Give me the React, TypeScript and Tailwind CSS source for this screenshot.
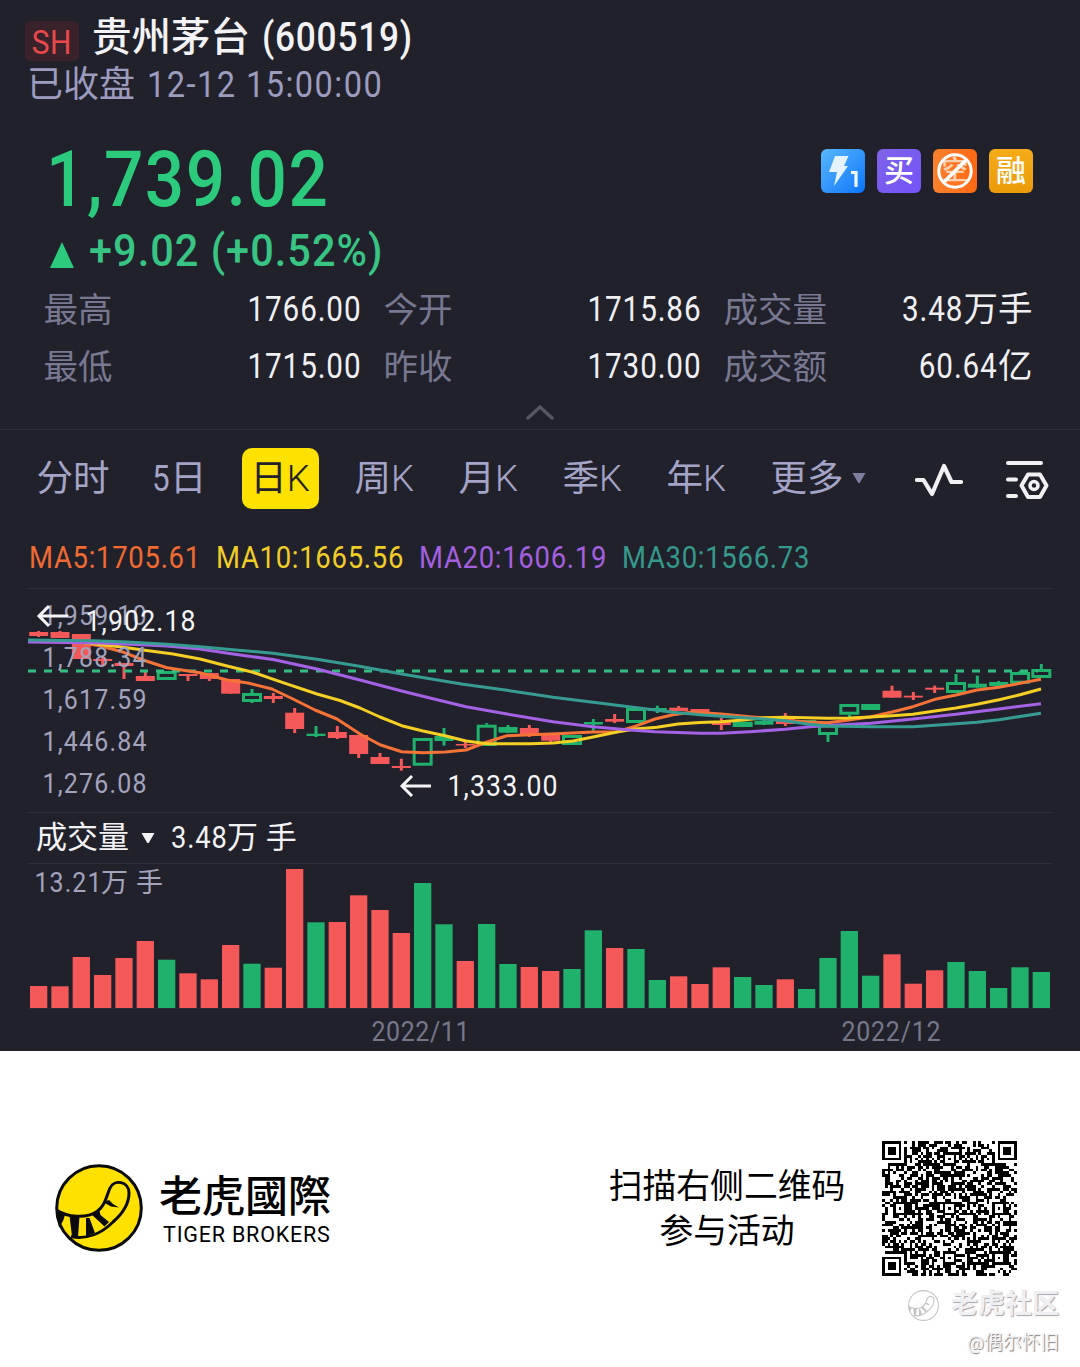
import type { ReactNode } from "react";

type Tone = "up" | "down";

interface Candle {
  tone: Tone;
  top: number;
  bottom: number;
  high: number;
  low: number;
  hollow?: boolean;
  volume: number;
}

const UP = "#20b26c";
const DOWN = "#f55858";
const STEP = 1024 / 48;

const r = (top: number, bottom: number, high: number, low: number, volume: number): Candle => ({
  tone: "down", top, bottom, high, low, volume,
});
const g = (top: number, bottom: number, high: number, low: number, volume: number): Candle => ({
  tone: "up", top, bottom, high, low, volume,
});
const h = (top: number, bottom: number, high: number, low: number, volume: number): Candle => ({
  tone: "up", top, bottom, high, low, volume, hollow: true,
});

// body top, body bottom, wick top, wick bottom, volume bar height
const CANDLES: Candle[] = [
  r(43, 47, 42, 48, 22), r(43, 49, 42, 49, 21.7), r(45, 70, 45, 70, 51), r(70, 72, 68, 76, 33),
  r(74, 77, 74, 90, 50), r(87, 92, 83, 92, 67), h(82, 91, 82, 91, 48.3), r(85, 87, 85, 92, 34.7),
  r(84, 90, 84, 92, 28.7), r(90, 104.7, 90, 104.7, 63), h(104, 113, 100, 114, 44.3), r(107, 110, 104, 114, 40.3),
  r(123.7, 140, 119, 144, 139), g(144.7, 147, 137, 148, 85.7), r(143, 149, 137, 150, 86), r(146, 165, 146, 169, 112.7),
  r(168, 175, 164, 175, 98), r(177, 179, 169.7, 181.7, 75), h(149, 176.7, 149, 176.7, 125), g(147, 152, 139, 156.6, 83.7),
  r(155, 156.5, 153, 159, 47), h(135.7, 157, 134, 157, 84), g(138, 143.7, 136, 143.7, 44), r(139, 145.7, 136, 148, 41),
  r(144.7, 151.7, 144.7, 153.7, 37), h(146, 156, 146, 156, 39), g(133, 135.5, 130, 141.7, 77.7), r(130, 132.7, 125, 134, 60),
  h(119, 134, 119, 134, 59), g(119, 122, 116.7, 124, 28), r(118.7, 122, 117, 122, 31.7), r(120, 123, 120, 125, 24),
  r(133, 136, 129, 141, 40.7), h(132.7, 138, 132.7, 138, 31), g(131.7, 135.7, 131, 136, 23), r(127, 135, 124, 137, 28.7),
  g(131, 135, 131, 135, 19), h(135.7, 146, 135.7, 153, 50), h(115, 125.7, 115, 129, 77), g(115, 121, 115, 121, 32.3),
  r(101.7, 108.7, 96.7, 108.7, 53.7), r(106.7, 108.5, 103, 111, 24.3), r(98.7, 100.7, 96.7, 104, 37.7), h(93, 104, 85, 104, 46),
  g(94.7, 98.7, 86.7, 98.7, 37), g(93, 97, 92, 97, 20), h(83, 94.7, 82, 94.7, 40.7), h(80, 89, 75, 89, 36),
];

const MA_LINES = [
  {
    color: "#f57337",
    label: "MA5:1705.61",
    legend: "w-[187px] text-[#f06a32]",
    points: "0,52 42,52.5 72,56.7 94,62.7 115,71 139,78.7 172,83.7 199,91 220,94 244,100 265,110 287,121 309,130 332,145 352,155.7 373.7,162.7 395,163.7 417,163 438,161 459,153 479,146.7 502,145.7 529,144.7 565,143 589,142.7 609,136.7 627,130 645,125.7 665,123 693,125 722,127.7 757,131 779,133 800,133.7 821,131 843,127.7 864,123 885,117.7 907,110.3 928,106 949,101 971,98.3 992,94.3 1013,90.3",
  },
  {
    color: "#f6cf25",
    label: "MA10:1665.56",
    legend: "w-[203px] text-[#f0cd28]",
    points: "0,52 42,52 72,55.5 94,58 115,61 145,65 172,70 199,77 224,83 255,93.7 289,105 312,111.5 332,119 352,128 373.7,136.7 395,142 417,146.7 438,152 459,154.7 502,154.7 525,154 545,152 565,148 589,143 607,140 629,138.3 650,135 672,133.5 693,132.7 715,131 736,128.7 757,128.3 800,129.3 821,129 843,128 864,126.7 885,125.3 907,122 928,119 949,115.3 971,110.7 992,105.7 1013,100",
  },
  {
    color: "#a462e4",
    label: "MA20:1606.19",
    legend: "w-[203px] text-[#a35fdf]",
    points: "0,53 72,54 119,56 139,57 172,60 205,65 245,70.5 289,80 330,90.5 373.7,102 405,109.7 438,117.7 479,125 525,132.7 565,137.7 599,140.7 627,142.7 672,144.3 693,144.3 722,142.7 757,140.3 782,137.7 805,136.3 843,134.3 885,130 928,125.3 971,120 1013,114.7",
  },
  {
    color: "#369c91",
    label: "MA30:1566.73",
    legend: "w-[200px] text-[#34998b]",
    points: "0,51 65,51.7 99,53 139,55.3 172,57.7 205,60.7 245,64.3 289,70.3 330,77 373.7,85 435,95.3 479,101.3 525,108.3 565,113.3 609,118.7 645,123.3 672,125.7 693,127.3 736,130 757,131.7 779,135 800,137 843,137.7 885,137.7 907,136.3 949,133.3 971,130.7 1013,124.3",
  },
];

const AXIS = ["1,959.10", "1,788.34", "1,617.59", "1,446.84", "1,276.08"];

// label, number, unit
const STATS = [
  [["最高", "1766.00", ""], ["今开", "1715.86", ""], ["成交量", "3.48", "万手"]],
  [["最低", "1715.00", ""], ["昨收", "1730.00", ""], ["成交额", "60.64", "亿"]],
];

const K_TABS = ["周", "月", "季", "年"];

function Badge({ className, children }: { className: string; children: ReactNode }) {
  return (
    <div className={`flex h-11 w-11 items-center justify-center overflow-hidden rounded-[6px] text-[30px] leading-[46px] font-medium text-white ${className}`}>
      {children}
    </div>
  );
}

function Header() {
  return (
    <header className="h-[138px] pt-[14px]">
      <div className="flex h-[46px] items-start pl-[25px]">
        <span className="mt-[7px] h-10 w-[54px] rounded-[5px] bg-[#39222a] text-center text-[34px] leading-[43px] text-[#e9494d]">
          <span className="inline-block scale-x-[0.88] tracking-[0.5px]">SH</span>
        </span>
        <h1 className="ml-[13px] flex text-[39.5px] leading-[47px] font-medium whitespace-pre text-[#f3f3f5]">
          贵州茅台
          <span className="ml-[12px] origin-left scale-x-[0.86] text-[41px] leading-[46px] tracking-[0.9px]">(600519)</span>
        </h1>
      </div>
      <div className="flex pl-[27px] text-[36px] leading-[51px] text-[#9c9cbe]">
        已收盘
        <span className="ml-[12px] origin-left scale-x-[0.88] text-[37px] leading-[50px] tracking-[1.65px]">12-12 15:00:00</span>
      </div>
    </header>
  );
}

function Quote() {
  return (
    <section className="h-[292px] border-b border-[#30303d]">
      <div className="flex h-[80px] justify-between pr-[47px] pl-[46px]">
        <div className="origin-left scale-x-[0.9] text-[77px] leading-[84px] font-medium tracking-[1.7px] text-[#2bca7c]">1,739.02</div>
        <div className="mt-[11px] flex gap-3">
          <Badge className="bg-linear-to-br from-[#58b7fb] to-[#0674fa]">
            <svg viewBox="0 0 44 44" className="h-11 w-11">
              <path d="M14 7h13.500l-4.500 10h4L13 37l3-14H8z" fill="#e4f3ff" />
              <path d="M30 23.500h5V38" fill="none" stroke="#f1f8ff" strokeWidth="3.200" />
            </svg>
          </Badge>
          <Badge className="bg-linear-to-br from-[#8062e8] to-[#7353f8]">买</Badge>
          <Badge className="bg-linear-to-r from-[#f8812e] to-[#ff6710]">
            <span className="relative flex h-11 w-11 items-center justify-center text-[27px] text-[#ffd0ae]">
              空
              <svg viewBox="0 0 44 44" className="absolute inset-0">
                <circle cx="22" cy="22" r="16.200" fill="none" stroke="#fff" strokeWidth="3" />
                <path d="M33 11 11 33" stroke="#fff" strokeWidth="3.500" />
              </svg>
            </span>
          </Badge>
          <Badge className="bg-linear-to-b from-[#f5ac18] to-[#eb9b08]">融</Badge>
        </div>
      </div>
      <div className="flex h-[66px] items-center pl-[50px] text-[45px] leading-[66px] font-medium text-[#38c483]">
        <svg viewBox="0 0 24 26" className="mt-[8px] mr-[15px] h-[26px] w-6">
          <path d="M12 0 24 26H0z" fill="#2bca7c" />
        </svg>
        <span className="origin-left scale-x-[0.92] tracking-[1.15px] whitespace-pre">+9.02 (+0.52%)</span>
      </div>
      <div>
        {STATS.map((row) => (
          <div key={row[0][0]} className="grid h-[57px] grid-cols-[318px_318px_309px] gap-x-[22px] pl-[43.500px] text-[34.5px] leading-[50px] text-[#f0f0f3]">
            {row.map(([label, value, unit]) => (
              <div key={label} className="flex">
                <span className="mr-auto leading-[52px] text-[#787890]">{label}</span>
                <span className="origin-right scale-x-[0.86] tracking-[1px]">{value}</span>
                {unit && <span>{unit}</span>}
              </div>
            ))}
          </div>
        ))}
      </div>
      <svg viewBox="0 0 28 16" className="mx-auto mt-[6px] h-4 w-7">
        <path d="M2 14 14 3l12 11" fill="none" stroke="#555563" strokeWidth="3.500" strokeLinecap="round" />
      </svg>
    </section>
  );
}

function Tabs() {
  return (
    <nav className="grid h-[96px] grid-cols-[115px_90px_114px_104px_104px_104px_104px_143px_91px_43px] items-center pl-[36.500px] text-[36.5px] leading-[61px] whitespace-nowrap text-[#a4a4c6]">
      <span>分时</span>
      <span className="flex">
        <span className="-mr-[2px] origin-left scale-x-[0.86]">5</span>日
      </span>
      <span className="flex h-[61px] w-[77px] justify-center rounded-[10px] bg-[#fde100] text-[#22222a]">
        日<span className="font-light">K</span>
      </span>
      {K_TABS.map((tab) => (
        <span key={tab} className="-ml-[1px] flex">
          {tab}
          <span className="font-light">K</span>
        </span>
      ))}
      <span className="-ml-[1px] flex items-center">
        更多
        <svg viewBox="0 0 16 12" className="ml-[7px] h-3 w-4">
          <path d="M1.500 1h13L9 10.500q-1 1.200-2 0z" fill="#7f7fa0" />
        </svg>
      </span>
      <svg viewBox="0 0 48 36" className="mt-[4px] h-9 w-12">
        <path d="M2 18h6.500L17 32 29 4l7.500 16H46" fill="none" stroke="#f1f1f3" strokeWidth="4.200" strokeLinecap="round" strokeLinejoin="round" />
      </svg>
      <svg viewBox="0 0 44 40" className="mt-[4px] h-10 w-11 justify-self-end" fill="none" stroke="#f1f1f3" strokeWidth="4" strokeLinecap="round" strokeLinejoin="round">
        <path d="M3 3h33M3 19.500h8M3 36h8M23 14.500h12l6.500 11L35 37H23l-6.500-11.500z" />
        <circle cx="29" cy="25.500" r="4" strokeWidth="3.500" />
      </svg>
    </nav>
  );
}

function ChartLabel({ x, y, width, children }: { x: number; y: number; width: number; children: string }) {
  return (
    <text transform={`translate(${x} ${y}) scale(0.89 1)`} textLength={width / 0.89}>
      {children}
    </text>
  );
}

function PriceChart() {
  return (
    <svg viewBox="0 0 1024 223" className="block h-[223px] w-[1024px] overflow-visible">
      {CANDLES.map((c, i) => {
        const x = (i + 0.5) * STEP;
        const color = c.tone === "up" ? UP : DOWN;
        const body = c.bottom - c.top;
        return (
          <g key={i}>
            {c.hollow ? (
              <>
                <path d={`M${x} ${c.high}V${c.top}M${x} ${c.bottom}V${c.low}`} stroke={color} strokeWidth="3" />
                <rect x={x - 8.5} y={c.top + 1.5} width="17" height={body - 3} fill="none" stroke={color} strokeWidth="3" />
              </>
            ) : (
              <>
                <path d={`M${x} ${c.high}V${c.low}`} stroke={color} strokeWidth="3" />
                <rect x={x - 9.5} y={c.top} width="19" height={body} fill={color} />
              </>
            )}
          </g>
        );
      })}
      <path d="M0 82H1010" stroke="#34bd81" strokeWidth="3" strokeDasharray="8 8" />
      {MA_LINES.map((line) => (
        <polyline key={line.label} points={line.points} fill="none" stroke={line.color} strokeWidth="3" strokeLinejoin="round" />
      ))}
      <g fill="#a3a3bc" fontSize="28">
        {AXIS.map((label, i) => (
          <ChartLabel key={label} x={14.5} y={36 + i * 42} width={104}>{label}</ChartLabel>
        ))}
      </g>
      <g fill="none" stroke="#f4f4f6" strokeWidth="3">
        <path d="M40 27H11M21 17 11 27l10 10" />
        <path d="M403 197H374M384 187l-10 10 10 10" />
      </g>
      <g fill="#f4f4f6" fontSize="30">
        <ChartLabel x={57.5} y={41.5} width={110}>1,902.18</ChartLabel>
        <ChartLabel x={419.5} y={206.5} width={110}>1,333.00</ChartLabel>
      </g>
    </svg>
  );
}

function VolumeChart() {
  return (
    <svg viewBox="0 0 1024 187" className="block h-[187px] w-[1024px]">
      {CANDLES.map((c, i) => (
        <rect key={i} x={i * STEP + 2} y={144 - c.volume} width="17.300" height={c.volume} fill={c.tone === "up" ? UP : DOWN} />
      ))}
      <path d="M0 144.500H1024" stroke="#2b2b38" />
      <g fill="#a3a3bc" fontSize="28">
        <ChartLabel x={6.5} y={28} width={67}>13.21</ChartLabel>
        <text x="73" y="28" fontSize="27">万</text>
        <text x="108" y="28" fontSize="27">手</text>
      </g>
      <g fill="#77778a" fontSize="28">
        <ChartLabel x={343.5} y={177} width={98}>2022/11</ChartLabel>
        <ChartLabel x={813.5} y={177} width={99}>2022/12</ChartLabel>
      </g>
    </svg>
  );
}

function TigerMark({ className, disc, ink }: { className: string; disc: string; ink: string }) {
  return (
    <svg viewBox="0 0 88 88" className={className}>
      <circle cx="44" cy="44" r="42.300" fill={disc} stroke={ink} strokeWidth="3" />
      <path
        d="M2.300 46.500C12 53 31 55 42 47.500 50 42 51 33 55 24c4-9 19-7 19 5 0 13-8 22-16 29-11 11-26 18-42 14.500"
        fill="none"
        stroke={ink}
        strokeWidth="3"
      />
      <path
        d="M2 47l8 4-2 6-4 7zM14.500 51.500l10 1-1.500 20.500-6-.5zM31 54h3.500L40 69l-9 3.500zM36 50l8-5 1.500 6L54 58l-4.500 4.500zM48 38l6-2 4 4 6 3.500-8-1z"
        fill={ink}
      />
    </svg>
  );
}

const QR_SIZE = 49;

function finder(x: number, y: number) {
  const ring = Math.max(Math.abs(x - 3), Math.abs(y - 3));
  return ring === 3 || ring <= 1;
}

function buildQr() {
  let seed = 600519;
  let path = "";
  const marks = [6, 24, 42];
  for (let y = 0; y < QR_SIZE; y++) {
    for (let x = 0; x < QR_SIZE; x++) {
      seed = (Math.imul(seed, 1664525) + 1013904223) >>> 0;
      let on = (seed >>> 16) % 100 < 53;
      if (x === 6 || y === 6) on = (x + y) % 2 === 0;
      for (const my of marks) {
        for (const mx of marks) {
          const ring = Math.max(Math.abs(x - mx), Math.abs(y - my));
          if (ring <= 2) on = ring !== 1;
        }
      }
      const far = QR_SIZE - 7;
      if (x < 8 && y < 8) on = x < 7 && y < 7 && finder(x, y);
      else if (x >= far - 1 && y < 8) on = x >= far && y < 7 && finder(x - far, y);
      else if (x < 8 && y >= far - 1) on = x < 7 && y >= far && finder(x, y - far);
      if (on) path += `M${x} ${y}h1v1h-1z`;
    }
  }
  return path;
}

const QR_PATH = buildQr();

function Footer() {
  return (
    <footer className="h-[316px] bg-white text-black">
      <div className="flex h-[236px] pt-[90px] pl-[55px]">
        <TigerMark className="mt-[23px] h-[88px] w-[88px]" disc="#ffe100" ink="#0b0b0b" />
        <div className="mt-[32px] ml-[16px] w-[440px]">
          <div className="font-['Roboto','Noto_Sans_CJK_TC',sans-serif] text-[43px] leading-[48px] font-medium">老虎國際</div>
          <div className="pl-[4px] text-[21.5px] leading-[27px] tracking-[0.8px]">TIGER BROKERS</div>
        </div>
        <div className="mt-[22.500px] w-[256px] text-center text-[33.800px] leading-[45px]">
          扫描右侧二维码
          <br />
          参与活动
        </div>
        <svg viewBox="0 0 49 49" className="ml-[27px] h-[135px] w-[135px]" shapeRendering="crispEdges">
          <path d={QR_PATH} fill="#000" />
        </svg>
      </div>
      <div className="flex h-[34px] items-center justify-end pr-[21px]">
        <TigerMark className="mt-[2px] mr-[12px] h-[31px] w-[31px]" disc="#fff" ink="#c4c4c8" />
        <span className="text-[27px] leading-[36px] font-bold text-[#f0f0f3] [text-shadow:1px_1px_1px_#a4a4ac]">老虎社区</span>
      </div>
      <div className="mt-[8px] pr-[21px] text-right text-[18.800px] leading-[28px] text-[#f4f4f4] [text-shadow:1px_1px_1px_#7f7f84]">@偶尔怀旧</div>
    </footer>
  );
}

export default function App() {
  return (
    <div className="w-[1080px] bg-[#21212b] font-['Roboto','Noto_Sans_CJK_SC',sans-serif]">
      <Header />
      <Quote />
      <Tabs />
      <main className="px-7">
        <div className="flex h-[63px] border-b border-[#30303c] pl-[1px] text-[30.500px] leading-[64px]">
          {MA_LINES.map((line) => (
            <span key={line.label} className={line.legend}>
              <span className="inline-block origin-left scale-x-[0.9] tracking-[0.8px]">{line.label}</span>
            </span>
          ))}
        </div>
        <PriceChart />
        <div className="flex h-[52px] items-center border-y border-[#30303c] pl-[8px] text-[31px] text-[#f3f3f5]">
          成交量
          <svg viewBox="0 0 16 12" className="mr-[15px] ml-[11px] h-3 w-4">
            <path d="M1.500 1h13L9 10.500q-1 1.200-2 0z" fill="currentColor" />
          </svg>
          <span className="w-[56px]">
            <span className="inline-block origin-left scale-x-[0.88] tracking-[1px]">3.48</span>
          </span>
          万 手
        </div>
        <VolumeChart />
      </main>
      <Footer />
    </div>
  );
}
